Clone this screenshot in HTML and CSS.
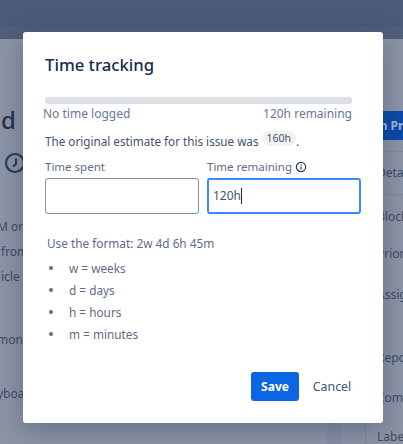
FILE: index.html
```html
<!DOCTYPE html>
<html lang="en">
<head>
    <meta charset="UTF-8">
    <title>Time tracking</title>
    <link rel="stylesheet" href="styles.css">
</head>
<body>
    <div class="page">
        <div class="topbar"></div>
        <div class="content">
            <div class="main">
                <h2 class="issue-title">d 1</h2>
                <svg class="clock" width="22" height="22" viewBox="0 0 22 22" fill="none" stroke="#2a3a58" stroke-width="2.2">
                    <circle cx="11" cy="11" r="9"/>
                    <path d="M12 6.5v5.5l-3 2.5"/>
                </svg>
                <p class="line l1">M or</p>
                <p class="line l2">from</p>
                <p class="line l3">icle</p>
                <p class="line l4">mon</p>
                <p class="line l5">yboa</p>
            </div>
            <div class="gutter"><div class="scroll-track"></div></div>
            <div class="side">
                <div class="status-btn">In Progress</div>
                <div class="side-tab">Details</div>
                <div class="side-row r1">Blocked</div>
                <div class="side-row r2">Priority</div>
                <div class="side-row r3">Assignee</div>
                <div class="side-row r4">Reporter</div>
                <div class="side-row r5">Components</div>
                <div class="side-row r6">Labels</div>
            </div>
        </div>
    </div>

    <div class="modal">
        <h1>Time tracking</h1>

        <div class="progress"></div>
        <div class="progress-labels">
            <span>No time logged</span>
            <span>120h remaining</span>
        </div>

        <p class="estimate">The original estimate for this issue was <span class="lozenge">160h</span>.</p>

        <div class="fields">
            <div class="field">
                <label for="spent">Time spent</label>
                <input type="text" id="spent">
            </div>
            <div class="field">
                <label for="remaining">Time remaining
                    <svg class="info" width="12" height="12" viewBox="0 0 12 12" fill="none" stroke="#2a3a58" stroke-width="1.2">
                        <circle cx="6" cy="6" r="4.6"/>
                        <path d="M6 5.4v3M6 3.2v1.2"/>
                    </svg>
                </label>
                <div class="fake-input">120h<span class="caret"></span></div>
            </div>
        </div>

        <div class="help">
            <p>Use the format: 2w 4d 6h 45m</p>
            <ul>
                <li>w = weeks</li>
                <li>d = days</li>
                <li>h = hours</li>
                <li>m = minutes</li>
            </ul>
        </div>

        <div class="actions">
            <button class="save">Save</button>
            <button class="cancel">Cancel</button>
        </div>
    </div>
</body>
</html>
```

FILE: styles.css
```css
/* Page behind the dialog */
html, body {
    margin: 0;
    padding: 0;
    height: 100%;
    overflow: hidden;
}

body {
    font-family: "Noto Sans", sans-serif;
    font-size: 12px;
    color: #44546f;
    background-color: #8b93a5;
}

.page {
    height: 444px;
    display: flex;
    flex-direction: column;
}

.topbar {
    height: 39px;
    background: linear-gradient(#4b5a76 27px, #525f79 27px);
}

.content {
    flex: 1;
    display: flex;
    justify-content: space-between;
    overflow: hidden;
}

.main {
    width: 60px;
    white-space: nowrap;
    overflow: hidden;
    color: #3f4b63;
}

.issue-title {
    margin: 65px 0 0 1px;
    font-size: 24px;
    line-height: 32px;
    font-weight: 500;
    color: #26324c;
}

.clock {
    display: block;
    margin: 16px 0 0 4px;
}

.line {
    margin: 0 0 0 -3px;
    line-height: 20px;
}

.l1 { margin-top: 43px; }
.l2 { margin-top: 5px; margin-left: 1px; }
.l3 { margin-top: 5px; margin-left: 1px; }
.l4 { margin-top: 43px; }
.l5 { margin-top: 34px; }

.gutter {
    flex: 1;
    display: flex;
    justify-content: flex-end;
}

.scroll-track {
    width: 15px;
    margin-right: 23px;
    background-color: #858d9f;
}

.side {
    flex: none;
    width: 37px;
    border-left: 1px solid #7f8798;
    white-space: nowrap;
    overflow: hidden;
    color: #3f4b63;
}

.status-btn {
    margin: 72px 0 0 2px;
    height: 29px;
    line-height: 29px;
    padding-left: 7px;
    background-color: #0b4aa8;
    color: #9fb4d6;
    font-weight: 700;
}

.side-tab {
    margin-top: 11px;
    height: 42px;
    line-height: 42px;
    padding-left: 11px;
    border-top: 1px solid #7f8798;
    border-bottom: 1px solid #7f8798;
}

.side-row {
    line-height: 20px;
    padding-left: 11px;
}

.r1 { margin-top: 12px; }
.r2 { margin-top: 17px; }
.r3 { margin-top: 21px; }
.r4 { margin-top: 43px; }
.r5 { margin-top: 20px; }
.r6 { margin-top: 19px; }

/* Dialog */
.modal {
    position: absolute;
    left: 23px;
    top: 32px;
    width: 360px;
    height: 391px;
    box-sizing: border-box;
    padding: 20px 22px 0;
    background-color: #fff;
    border-radius: 3px;
    box-shadow: 0 6px 24px rgba(9, 30, 66, 0.3);
}

h1 {
    margin: 0;
    font-size: 16.7px;
    line-height: 26px;
    font-weight: 500;
    color: #172b4d;
}

.progress {
    height: 7px;
    margin: 19px 9px 0 0;
    border-radius: 3px;
    background-color: #dcdfe4;
}

.progress-labels {
    display: flex;
    justify-content: space-between;
    margin: 0 9px 0 -2px;
    line-height: 20px;
    color: #6b778c;
}

.estimate {
    margin: 7px 0 0;
    font-size: 11.7px;
    line-height: 20px;
    color: #44546f;
}

.lozenge {
    display: inline-block;
    vertical-align: 4px;
    padding: 0 5px;
    border-radius: 8px;
    background-color: #f1f2f4;
    font-size: 10.5px;
    line-height: 15px;
}

.fields {
    display: grid;
    grid-template-columns: 154px 154px;
    gap: 8px;
    margin-top: 6px;
}

label {
    display: block;
    font-size: 11.5px;
    line-height: 20px;
    color: #5e6c84;
}

.info {
    vertical-align: -2px;
}

input, .fake-input {
    display: block;
    box-sizing: border-box;
    width: 154px;
    height: 36px;
    margin-top: 1px;
    border-radius: 3px;
    font-family: inherit;
    font-size: 12px;
    color: #44546f;
    background-color: #fff;
}

input {
    border: 1px solid #8590a2;
    outline: none;
}

.fake-input {
    border: 2px solid #388bff;
    padding-left: 4px;
    line-height: 32px;
}

.caret {
    display: inline-block;
    width: 1px;
    height: 16px;
    vertical-align: -4px;
    background-color: #172b4d;
}

.help {
    margin: 19px 0 0 2px;
    font-size: 11.8px;
    color: #5e6c84;
}

.help p {
    margin: 0;
    line-height: 20px;
}

.help ul {
    margin: 5px 0 0;
    padding-left: 2px;
    list-style: none;
}

.help li {
    display: flex;
    align-items: center;
    gap: 16px;
    line-height: 20px;
    margin-bottom: 2px;
}

.help li::before {
    content: "";
    width: 4px;
    height: 4px;
    border-radius: 50%;
    background-color: #5e6c84;
}

.actions {
    display: flex;
    justify-content: flex-end;
    align-items: center;
    gap: 3px;
    margin: 28px -1px 0 0;
}

button {
    height: 29px;
    border: none;
    border-radius: 3px;
    font-family: inherit;
    font-size: 12px;
    cursor: pointer;
}

.save {
    width: 48px;
    background-color: #0c66e4;
    color: #fff;
    font-weight: 700;
}

.cancel {
    width: 60px;
    font-size: 12.4px;
    background-color: transparent;
    color: #44546f;
}
```
